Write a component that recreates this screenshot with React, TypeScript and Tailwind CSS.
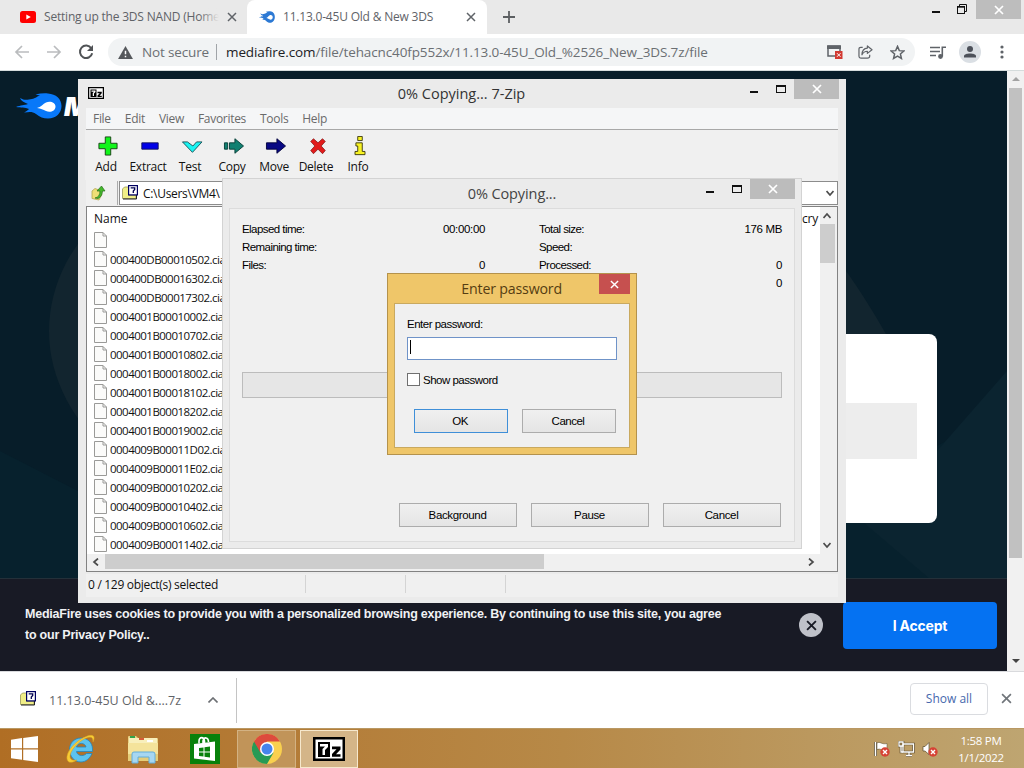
import React from "react";

const FILES = [
  "",
  "000400DB00010502.cia",
  "000400DB00016302.cia",
  "000400DB00017302.cia",
  "0004001B00010002.cia",
  "0004001B00010702.cia",
  "0004001B00010802.cia",
  "0004001B00018002.cia",
  "0004001B00018102.cia",
  "0004001B00018202.cia",
  "0004001B00019002.cia",
  "0004009B00011D02.cia",
  "0004009B00011E02.cia",
  "0004009B00010202.cia",
  "0004009B00010402.cia",
  "0004009B00010602.cia",
  "0004009B00011402.cia",
];

function Cross({ size, width, className }: { size: number; width: number; className: string }) {
  return (
    <svg width={size} height={size} viewBox="0 0 10 10" className={className} fill="none" stroke="currentColor" strokeWidth={width}>
      <path d="M1 1L9 9M9 1L1 9" />
    </svg>
  );
}

function Flame({ className, color, inner }: { className: string; color: string; inner: string }) {
  return (
    <svg viewBox="0 0 46 26" preserveAspectRatio="none" className={className}>
      <path
        d="M0 14C5 12 8 12.500 12 11C8 9.500 5 8 4 5C9 8 12 6.500 16 6C19 5.500 20 4 24 2.500C22 2.200 21 2 19.500 1.500C24 0.500 28 0 32 0.500C40 1 45.500 6 45.500 13C45.500 20 40 25.500 32 25.500C27 25.500 24 24 20 21C16 18 13 19 8 19.500C11 18 12 17 13 16C9 14 5 15 0 14Z"
        fill={color}
      />
      <path d="M21 15C25 14 27 11 30 9.500C34 7.500 39.500 9.500 39.500 13.500C39.500 18 34 20 30 18C27 16.500 25 15.500 21 15Z" fill={inner} />
    </svg>
  );
}

function SevenZip({ className }: { className: string }) {
  return (
    <svg viewBox="0 0 32 24" className={className}>
      <rect width="32" height="24" fill="#000" />
      <rect x="2.500" y="2.500" width="27" height="19" fill="#fff" />
      <rect x="5" y="5" width="12" height="15" fill="#000" />
      <path d="M7 7H15V10L12 13V18H9.500V12L12 9.500H7Z" fill="#fff" />
      <path d="M19 9.500H27.500V12.500L23 17.300H27.500V19.800H19V17L23.500 12.300H19Z" fill="#000" />
    </svg>
  );
}

function ArchiveIcon({ className }: { className: string }) {
  return (
    <svg viewBox="0 0 16 15" className={className}>
      <path d="M0.500 4L2.500 2H7V10.500H14V13.500H0.500Z" fill="#f0ee87" stroke="#8d8b4a" strokeWidth="0.700" />
      <path d="M1 14H14.500V10" stroke="#222" fill="none" />
      <rect x="6.600" y="0.600" width="8.800" height="9.300" fill="#fff" stroke="#000060" strokeWidth="1.200" />
      <path d="M8.700 2.900H12.700V4.500L11.300 6V8" stroke="#000050" strokeWidth="1.300" fill="none" />
    </svg>
  );
}

function WindowButtons({ closeClass }: { closeClass: string }) {
  return (
    <div className="flex shrink-0 items-start">
      <div className="mt-3 h-[2px] w-2 bg-[#111]" />
      <div className="mt-[6px] ml-[18px] h-2 w-[10px] border border-t-2 border-[#111]" />
      <div className={closeClass}>
        <Cross size={10} width={1.700} className="text-white" />
      </div>
    </div>
  );
}

function BrowserChrome() {
  return (
    <>
      <div className="flex h-[34px] shrink-0 bg-[#e9e9e9] text-[12px] text-[#5f6368]">
        <div className="flex w-[247px] items-center pl-5">
          <svg viewBox="0 0 16 12" className="h-3 w-4">
            <rect width="16" height="12" rx="2.500" fill="#f00" />
            <path d="M6.300 3.400L10.800 6L6.300 8.600Z" fill="#fff" />
          </svg>
          <div className="relative ml-2 w-[175px] overflow-hidden font-['Open_Sans',sans-serif] tracking-[-0.200px] whitespace-nowrap">
            Setting up the 3DS NAND (Home
            <div className="absolute inset-y-0 right-0 w-5 bg-linear-to-r from-transparent to-[#e9e9e9]" />
          </div>
          <Cross size={10} width={1.500} className="ml-[8px] text-[#5f6368]" />
        </div>
        <div className="flex w-[240px] items-center rounded-t-lg bg-white pl-3">
          <Flame className="h-[12px] w-4" color="#2c79d4" inner="#fff" />
          <span className="ml-2 w-[184px] font-['Open_Sans',sans-serif] tracking-[-0.200px] whitespace-nowrap">11.13.0-45U Old &amp; New 3DS</span>
          <Cross size={10} width={1.500} className="-ml-px text-[#5f6368]" />
        </div>
        <svg viewBox="0 0 12 12" className="mt-[11px] ml-4 h-3 w-3" stroke="#5c5f62" strokeWidth="1.800">
          <path d="M6 0V12M0 6H12" />
        </svg>
        <div className="ml-auto flex items-start">
          <div className="mt-[11px] h-[2px] w-2 bg-[#111]" />
          <svg viewBox="0 0 10 10" className="mt-1 ml-[17px] h-[10px] w-[10px]" fill="none" stroke="#111">
            <path d="M2.500 2V0.500H9.500V7.500H8" />
            <rect x="0.500" y="2.500" width="7" height="7" />
            <path d="M0 3.200H8" />
          </svg>
          <div className="mr-[3px] ml-[9px] flex h-[19px] w-[45px] items-center justify-center bg-[#bdbdbd]">
            <Cross size={10} width={1.700} className="text-white" />
          </div>
        </div>
      </div>
      <div className="flex h-[37px] shrink-0 items-center border-b border-[#d5dcdc] bg-white pl-[14px]">
        <svg viewBox="0 0 16 14" className="h-[14px] w-4" fill="none" stroke="#babcbe" strokeWidth="1.700">
          <path d="M15 7H2M8 1L2 7L8 13" />
        </svg>
        <svg viewBox="0 0 16 14" className="ml-4 h-[14px] w-4" fill="none" stroke="#babcbe" strokeWidth="1.700">
          <path d="M1 7H14M8 1L14 7L8 13" />
        </svg>
        <svg viewBox="0 0 16 16" className="ml-4 h-4 w-4" fill="none" stroke="#505356" strokeWidth="2">
          <path d="M13.300 4.300A6.200 6.200 0 1 0 14.200 9.300" />
          <path d="M15 1V7H9Z" fill="#505356" stroke="none" />
        </svg>
        <div className="ml-[14px] flex h-7 w-[807px] items-center rounded-full bg-[#f1f3f4] pl-[10px] font-['Open_Sans',sans-serif] text-[13.500px] whitespace-nowrap text-[#6b6f73]">
          <svg viewBox="0 0 16 14" className="h-[13px] w-[15px]">
            <path d="M8 0L16 14H0Z" fill="#55585c" />
            <path d="M7.200 5H8.800V9H7.200ZM7.200 10.500H8.800V12H7.200Z" fill="#fff" />
          </svg>
          <span className="ml-[9px] w-[67px] tracking-[-0.150px]">Not secure</span>
          <span className="ml-[7px] h-4 w-px bg-[#a0a4a8]" />
          <span className="ml-[9px] w-[580px] tracking-[-0.120px]">
            <span className="text-[#202124]">mediafire.com</span>/file/tehacnc40fp552x/11.13.0-45U_Old_%2526_New_3DS.7z/file
          </span>
          <svg viewBox="0 0 16 14" className="ml-[21px] h-[14px] w-4">
            <path d="M1 1H13V11H1Z" fill="none" stroke="#5f6368" strokeWidth="1.500" />
            <path d="M0 0.500H14V4H0Z" fill="#5f6368" />
            <rect x="8" y="6" width="7.500" height="8" fill="#d23a32" />
            <path d="M10 8.200L13.500 11.800M13.500 8.200L10 11.800" stroke="#fff" />
          </svg>
        </div>
        <div className="-ml-[57px] flex items-center text-[#5f6368]">
          <svg viewBox="0 0 16 15" className="h-[14px] w-[15px]" fill="none" stroke="currentColor" strokeWidth="1.300" strokeLinejoin="round">
            <path d="M5 2.500H3Q1 2.500 1 4.500V12Q1 14 3 14H10Q12.500 14 12.500 12V10.500" />
            <path d="M10 1L15 5L10 9V6.700C7 6.700 5.500 8 4.200 10.500C4.300 6 6.500 3.500 10 3.300Z" />
          </svg>
          <svg viewBox="0 0 16 16" className="ml-[17px] h-[15px] w-[15px]" fill="none" stroke="currentColor" strokeWidth="1.600">
            <path d="M8 1.500L9.900 6L14.800 6.400L11.100 9.600L12.200 14.300L8 11.800L3.800 14.300L4.900 9.600L1.200 6.400L6.100 6Z" />
          </svg>
          <svg viewBox="0 0 16 13" className="ml-[25px] h-[13px] w-4" fill="none" stroke="currentColor" strokeWidth="1.600">
            <path d="M0 1.500H10M0 5.500H10M0 9.500H6M12.300 10.500V1.300H16" />
            <circle cx="10.500" cy="10.500" r="1.600" fill="currentColor" />
          </svg>
          <svg viewBox="0 0 22 22" className="ml-[13px] h-[22px] w-[22px]">
            <circle cx="11" cy="11" r="11" fill="#dadfe4" />
            <circle cx="11" cy="8" r="3" fill="#4c515a" />
            <path d="M5 16.500V15C5 11.500 17 11.500 17 15V16.500Z" fill="#4c515a" />
          </svg>
          <svg viewBox="0 0 4 14" className="ml-[19px] h-[14px] w-1" fill="currentColor">
            <circle cx="2" cy="2" r="1.600" />
            <circle cx="2" cy="7" r="1.600" />
            <circle cx="2" cy="12" r="1.600" />
          </svg>
        </div>
      </div>
    </>
  );
}

function WebPage() {
  return (
    <div className="flex h-[600px] shrink-0">
      <div className="relative flex w-[1007px] flex-col overflow-hidden bg-[#071d29]">
        <svg viewBox="0 0 1007 508" className="absolute top-0 left-0 h-[508px] w-[1007px]">
          <path d="M0 380V508H1007V340L846 420H78Z" fill="#07212d" />
          <ellipse cx="280" cy="260" rx="231" ry="180" fill="#12252f" />
          <path d="M700 90C800 120 850 200 890 270L900 400H846Z" fill="#12252f" />
          <path d="M850 440L937 380L1007 300V508H930Z" fill="#0b2430" />
        </svg>
        <div className="relative flex items-center pt-[22px] pl-4">
          <Flame className="h-[26px] w-[46px]" color="#0878f9" inner="#fff" />
          <span className="ml-[2px] pt-[2px] font-['Inter',sans-serif] text-[26px] leading-[24px] font-black text-white italic">M</span>
        </div>
        <div className="relative mt-[215px] ml-[500px] flex h-[189px] w-[437px] items-center justify-end rounded-lg bg-white pt-1 pr-5">
          <div className="h-14 w-[200px] bg-[#ededed]" />
        </div>
        <div className="relative mt-auto flex h-[93px] border-t border-[#243039] bg-[#181a25]">
          <div className="flex w-[720px] flex-col pt-[25px] pl-[25px] font-['Liberation_Sans',sans-serif] text-[12.500px] leading-[21px] font-bold tracking-[-0.230px] whitespace-nowrap text-[#f0f1f4]">
            <span>MediaFire uses cookies to provide you with a personalized browsing experience. By continuing to use this site, you agree</span>
            <span>to our Privacy Policy..</span>
          </div>
          <div className="mt-[34px] ml-[79px] flex h-6 w-6 items-center justify-center rounded-full bg-[#bfc1c9]">
            <Cross size={11} width={1.700} className="text-[#181a25]" />
          </div>
          <div className="mt-[23px] ml-5 flex h-[47px] w-[154px] items-center justify-center rounded bg-[#0572f2] font-['Inter',sans-serif] text-[14px] font-bold tracking-[-0.200px] text-white">
            I Accept
          </div>
        </div>
      </div>
      <div className="flex w-[17px] flex-col items-center bg-[#f1f1f1]">
        <div className="mt-[6px] h-0 w-0 border-x-4 border-b-4 border-x-transparent border-b-[#a3a3a3]" />
        <div className="mt-[7px] h-[470px] w-[13px] bg-[#c1c1c1]" />
        <div className="mt-auto mb-[8px] h-0 w-0 border-x-4 border-t-4 border-x-transparent border-t-[#444]" />
      </div>
    </div>
  );
}

function DownloadBar() {
  return (
    <div className="flex h-[57px] shrink-0 items-center border-t border-[#d9dadd] bg-white font-['Open_Sans',sans-serif] text-[12.500px] text-[#5f6368]">
      <ArchiveIcon className="mb-1 ml-5 h-[15px] w-4" />
      <span className="ml-[13px] w-[149px] pt-[2px] whitespace-nowrap">11.13.0-45U Old &amp;....7z</span>
      <svg viewBox="0 0 10 6" className="ml-[10px] h-[6px] w-[10px]" fill="none" stroke="#6c6f73" strokeWidth="1.600">
        <path d="M0.500 5.500L5 1L9.500 5.500" />
      </svg>
      <div className="ml-[18px] h-[45px] w-px bg-[#c4c4c4]" />
      <div className="ml-auto flex h-8 w-[78px] -translate-y-px items-center justify-center rounded border border-[#dadce0] text-[12px] font-medium text-[#4668ad]">Show all</div>
      <Cross size={11} width={1.500} className="mr-[12px] mb-[3px] ml-[13px] text-[#70757a]" />
    </div>
  );
}

function ExplorerIcon() {
  return (
    <svg viewBox="0 0 32 30" className="h-[30px] w-8">
      <path d="M1 3Q1 2 2 2H9L11 4H30Q31 4 31 5V27H1Z" fill="#e7d184" />
      <path d="M2 4H30V12H2Z" fill="#f8efbb" />
      <path d="M3 2H8V4H3Z" fill="#31a34a" />
      <path d="M12 4H17V6H12Z" fill="#d65c39" />
      <path d="M20 6H26V8H20Z" fill="#fff" />
      <path d="M1 9H31V26H1Z" fill="#f4e39b" />
      <path d="M1 20H31V27H1Z" fill="#e5cd78" />
      <path d="M5 29V20Q5 18 7 18H26Q28 18 28 20V29H22V23H11V29Z" fill="#a7d7f1" stroke="#62aeda" />
    </svg>
  );
}

function Taskbar() {
  return (
    <div className="flex h-10 shrink-0 items-center border-t border-[#b99863] bg-linear-to-r from-[#b06e24] via-[#b78947] via-55% to-[#bea571]">
      <svg viewBox="0 0 27 26" className="ml-[11px] h-[26px] w-[27px]" fill="#fff">
        <path d="M0 3.700L11 2.100V12.300H0ZM12.200 1.900L27 0V12.300H12.200ZM0 13.500H11V23.800L0 22.200ZM12.200 13.500H27V26L12.200 24Z" />
      </svg>
      <svg viewBox="0 0 32 32" className="ml-[27px] h-8 w-8">
        <path d="M16 5C22.500 5 27.500 9.500 27.500 16V18.500H11.500C11.800 22 17.500 24.500 21.500 20.500H27C25 25.500 20.500 29 16 29C9 29 4.500 23 4.500 16.500C4.500 10 9.500 5 16 5ZM11.500 14H21C20.500 9.500 12.500 9 11.500 14Z" fill="#5cc3ef" stroke="#2385bd" strokeWidth="0.800" />
        <path d="M28 9C31 3 28 0.500 20.500 3.800C10 8 1 19 2 26C3 31 8 29.500 12 27C7 28 4.500 26.500 5 22.500C7 14 17 6 23 4.500C27 3.500 28 5 28 9Z" fill="#f8cd36" stroke="#d9a01c" strokeWidth="0.500" />
      </svg>
      <div className="ml-[30px]">
        <ExplorerIcon />
      </div>
      <svg viewBox="0 0 30 30" className="ml-[31px] h-[30px] w-[30px]">
        <rect width="30" height="30" fill="#08810b" />
        <path d="M4 10L25 7.500V27L4 24.500Z" fill="#fff" />
        <path d="M9 9.500V7C9 2.500 14 2.500 14.500 7V9M13 9V7C14 2.500 18.500 3 18.500 8" fill="none" stroke="#fff" strokeWidth="1.600" />
        <path d="M9 14L13.500 13.400V17.500H9ZM14.500 13.200L20 12.500V17.500H14.500ZM9 18.500H13.500V22.500L9 22ZM14.500 18.500H20V23.400L14.500 22.700Z" fill="#08810b" />
      </svg>
      <div className="ml-[17px] flex h-[38px] w-[59px] items-center justify-center border border-[#d3b283] bg-[#c19459]">
        <svg viewBox="0 0 30 30" className="h-[30px] w-[30px]">
          <circle cx="15" cy="15" r="15" fill="#f9d04f" />
          <path d="M15 15L2 7.500A15 15 0 0 0 15 30L21.500 18.700Z" fill="#279a55" />
          <path d="M2 7.500A15 15 0 0 1 28 7.500H15L8.500 18.700Z" fill="#dd4b3d" />
          <circle cx="15" cy="15" r="7" fill="#fff" />
          <circle cx="15" cy="15" r="5.500" fill="#4684ec" />
        </svg>
      </div>
      <div className="ml-[4px] flex h-[38px] w-[58px] items-center justify-center border border-[#f6e8cd] bg-[#d4b588]">
        <SevenZip className="h-6 w-8" />
      </div>
      <div className="ml-auto flex items-center">
        <svg viewBox="0 0 16 16" className="h-4 w-4">
          <path d="M1.500 1V15" stroke="#57482d" strokeWidth="3" />
          <path d="M1.500 1V15" stroke="#fff" strokeWidth="1.500" />
          <path d="M3 2C6 0 8 4 13 2.500V9C9 10 6 7 3 8.500Z" fill="#fff" stroke="#57482d" strokeWidth="0.500" />
          <circle cx="11" cy="11" r="4.700" fill="#d64335" />
          <path d="M9 9L13 13M13 9L9 13" stroke="#fff" strokeWidth="1.400" />
        </svg>
        <svg viewBox="0 0 17 16" className="ml-2 h-4 w-[17px]" fill="none">
          <path d="M5 3H15.500V11H5ZM8 14.500H14M11 11V14.500M1 1H5V5H1ZM3 5V11H5" stroke="#57482d" strokeWidth="2.600" />
          <path d="M5 3H15.500V11H5ZM8 14.500H14M11 11V14.500" stroke="#fff" strokeWidth="1.300" />
          <path d="M1 1H5V5H1ZM3 5V11H5" stroke="#fff" strokeWidth="1.300" />
        </svg>
        <svg viewBox="0 0 16 16" className="ml-[7px] h-4 w-4">
          <path d="M1 5.500H3L7 1.500V13.500L3 10H1Z" fill="#fff" stroke="#57482d" strokeWidth="0.700" />
          <circle cx="11" cy="11" r="4.700" fill="#d64335" />
          <path d="M9 9L13 13M13 9L9 13" stroke="#fff" strokeWidth="1.400" />
        </svg>
      </div>
      <div className="mr-[15px] ml-[15px] flex w-[56px] flex-col items-center font-['Open_Sans',sans-serif] text-[11.500px] leading-[17px] tracking-[-0.300px] whitespace-nowrap text-white">
        <span>1:58 PM</span>
        <span>1/1/2022</span>
      </div>
    </div>
  );
}

const TOOLS = [
  {
    label: "Add",
    icon: <path d="M8 1H14V8H21V14H14V21H8V14H1V8H8Z" fill="#12f51b" stroke="#153d12" />,
  },
  { label: "Extract", icon: <path d="M2 7.500H20V14.500H2Z" fill="#0000e8" stroke="#11115c" /> },
  { label: "Test", icon: <path d="M0.500 6.500H6L12 11L16 6.500H22L11.500 18Z" fill="#19f3f1" stroke="#174f55" /> },
  {
    label: "Copy",
    icon: <path d="M0.500 7.500H4V14.500H0.500ZM6 7.500H12V3L21.500 11L12 19V14.500H6Z" fill="#118071" stroke="#063c35" />,
  },
  { label: "Move", icon: <path d="M0.500 7.500H12V3L21.500 11L12 19V14.500H0.500Z" fill="#080884" stroke="#00003a" /> },
  {
    label: "Delete",
    icon: <path d="M3 6L6 3L11 7.500L16 3L19 6L14.500 11L19 16L16 19.500L11 14.500L6 19.500L3 16L7.500 11Z" fill="#e21b1b" stroke="#801515" strokeWidth="0.800" />,
  },
  {
    label: "Info",
    icon: <path d="M8.500 0.500H13.500V5H8.500ZM6.500 7.500H13.500V17H16.500V20.500H5.500V17H8.500V11H6.500Z" fill="#f7f223" stroke="#39370e" />,
  },
];

function Chevron({ d, className }: { d: string; className: string }) {
  return (
    <svg viewBox="0 0 8 8" className={className} fill="none" stroke="#4b4b4b" strokeWidth="1.700">
      <path d={d} />
    </svg>
  );
}

function FileManager() {
  return (
    <div className="absolute top-[79px] left-[78px] flex h-[524px] w-[768px] flex-col bg-[#ebebeb] px-2 pb-[6px] font-['Open_Sans',sans-serif] text-[12px] text-[#111]">
      <div className="flex h-[29px] shrink-0">
        <SevenZip className="mt-[8px] ml-[2px] h-3 w-4 shrink-0" />
        <div className="mt-[5px] w-[646px] shrink-0 pl-[69px] text-center text-[14.500px] leading-[20px] tracking-normal text-[#333]">
          0% Copying... 7-Zip
        </div>
        <WindowButtons closeClass="ml-[8px] flex h-5 w-[45px] shrink-0 items-center justify-center bg-[#bcbcbc]" />
      </div>
      <div className="flex h-[22px] shrink-0 items-center gap-[14px] border-b border-[#a8a8a8] bg-[#f5f6f7] pl-[7px] text-[12px] tracking-[-0.300px] text-[#6a6a6a]">
        <span>File</span>
        <span>Edit</span>
        <span>View</span>
        <span>Favorites</span>
        <span>Tools</span>
        <span>Help</span>
      </div>
      <div className="-ml-px flex h-[50px] shrink-0 bg-[#f0f0f0] tracking-[-0.250px]">
        {TOOLS.map((t) => (
          <div key={t.label} className="flex w-[42px] flex-col items-center pt-[6px]">
            <svg viewBox="0 0 22 22" className="ml-[3px] h-5 w-[22px]">
              {t.icon}
            </svg>
            <span className="mt-[3px] leading-4">{t.label}</span>
          </div>
        ))}
      </div>
      <div className="flex h-[26px] shrink-0 items-center bg-[#f0f0f0]">
        <svg viewBox="0 0 16 16" className="ml-[5px] h-4 w-4">
          <path d="M1 6L4 3.500L8 5L11 9L8 15L1 13.500Z" fill="#efdf76" stroke="#ab9f44" strokeWidth="0.700" />
          <path d="M4 13Q9 12 9 6H6L10.500 1L14 6H11.500Q11 12 7 13.500Z" fill="#45b82d" stroke="#27701b" strokeWidth="0.700" />
        </svg>
        <div className="ml-[10px] h-[24px] w-px bg-[#aaa]" />
        <div className="ml-[1px] flex h-[24px] flex-1 items-center justify-between border border-[#8c8c8c] bg-white pr-[3px] pl-[2px]">
          <div className="flex items-center">
            <ArchiveIcon className="mb-[2px] h-[15px] w-4" />
            <span className="ml-[5px] pt-px tracking-[-0.300px]">C:\Users\VM4\</span>
          </div>
          <Chevron d="M0.500 2L4 6L7.500 2" className="h-2 w-2" />
        </div>
      </div>
      <div className="flex h-[366px] shrink-0 flex-col border border-[#828282] bg-white">
        <div className="flex h-[347px]">
          <div className="flex flex-1 flex-col overflow-hidden pl-[7px]">
            <div className="flex h-[23px] shrink-0 items-center justify-between pt-px">
              <span>Name</span>
              <span className="pr-[2px] tracking-[-0.200px]">cry</span>
            </div>
            {FILES.map((f, i) => (
              <div key={i} className="flex h-[19px] shrink-0 items-center">
                <svg viewBox="0 0 13 16" className="h-4 w-[13px]">
                  <path d="M0.500 0.500H9L12.500 4V15.500H0.500Z" fill="#fbfbfa" stroke="#9a9a98" />
                  <path d="M9 0.500V4H12.500" fill="none" stroke="#9a9a98" />
                </svg>
                <span className="ml-[3px] pt-[2px] text-[11.500px] tracking-[-0.520px] whitespace-nowrap">{f}</span>
              </div>
            ))}
          </div>
          <div className="flex w-[17px] flex-col items-center bg-[#f0f0f0]">
            <Chevron d="M0.500 6L4 2L7.500 6" className="mt-[5px] mr-[3px] h-2 w-2" />
            <div className="mt-[4px] mr-[2px] h-[39px] w-[15px] bg-[#cdcdcd]" />
            <Chevron d="M0.500 2L4 6L7.500 2" className="mt-auto mr-[3px] mb-[5px] h-2 w-2" />
          </div>
        </div>
        <div className="flex flex-1 items-center bg-[#f0f0f0] pb-[2px]">
          <Chevron d="M6 0.500L2 4L6 7.500" className="ml-[5px] h-2 w-2" />
          <div className="ml-[5px] h-[15px] w-[439px] bg-[#cdcdcd]" />
          <Chevron d="M2 0.500L6 4L2 7.500" className="mr-[22px] ml-auto h-2 w-2" />
        </div>
      </div>
      <div className="mt-[2px] flex flex-1 items-center bg-[#f0f0f0] pl-[2px]">
        <span className="w-[217px] pb-px tracking-[-0.300px] whitespace-nowrap">0 / 129 object(s) selected</span>
        <div className="mb-1 h-[18px] w-[100px] border-l border-[#d4d4d4]" />
        <div className="mb-1 h-[18px] w-[100px] border-l border-[#d4d4d4]" />
        <div className="mb-1 h-[18px] w-[100px] border-l border-[#d4d4d4]" />
      </div>
    </div>
  );
}

function Stat({ label, value }: { label: string; value: string }) {
  return (
    <div className="flex h-[18px] justify-between">
      <span className="tracking-[-0.560px]">{label}</span>
      <span>{value}</span>
    </div>
  );
}

function ProgressWindow() {
  return (
    <div className="absolute top-[178px] left-[222px] flex h-[371px] w-[580px] flex-col border border-[#d3d3d3] bg-[#ebebeb] px-[6px] pb-[6px] font-['Liberation_Sans',sans-serif] text-[11.500px] tracking-[-0.350px] text-black">
      <div className="flex h-[29px] shrink-0">
        <div className="mt-[5px] w-[477px] shrink-0 pl-[89px] text-center font-['Open_Sans',sans-serif] text-[14.500px] leading-[20px] tracking-[-0.100px] text-[#444]">
          0% Copying...
        </div>
        <WindowButtons closeClass="ml-[8px] flex h-5 w-[45px] shrink-0 items-center justify-center bg-[#bcbcbc]" />
      </div>
      <div className="flex flex-1 flex-col border border-[#dcdcdc] bg-[#f0f0f0] pr-[12px] pl-[12px]">
        <div className="flex h-[84px] shrink-0 justify-between pt-[11px] leading-[18px]">
          <div className="w-[243px]">
            <Stat label="Elapsed time:" value="00:00:00" />
            <Stat label="Remaining time:" value="" />
            <Stat label="Files:" value="0" />
          </div>
          <div className="w-[243px]">
            <Stat label="Total size:" value="176 MB" />
            <Stat label="Speed:" value="" />
            <Stat label="Processed:" value="0" />
            <Stat label="" value="0" />
          </div>
        </div>
        <div className="mt-[79px] h-[26px] shrink-0 border border-[#bcbcbc] bg-[#e6e6e6]" />
        <div className="mt-auto mr-px mb-[14px] flex justify-end gap-[14px]">
          {["Background", "Pause", "Cancel"].map((b) => (
            <div key={b} className="flex h-6 w-[118px] items-center justify-center border border-[#acacac] bg-linear-to-b from-[#f0f0f0] to-[#e5e5e5] pt-[2px] pr-px">
              {b}
            </div>
          ))}
        </div>
      </div>
    </div>
  );
}

function PasswordDialog() {
  return (
    <div className="absolute top-[273px] left-[387px] flex h-[182px] w-[250px] flex-col border border-[#b4924c] bg-[#efc669] px-[6px] pb-[6px] font-['Liberation_Sans',sans-serif] text-[11.500px] tracking-[-0.500px] text-black">
      <div className="flex h-[29px] shrink-0 justify-end">
        <span className="mt-[5px] mr-[37px] font-['Open_Sans',sans-serif] text-[14.200px] leading-[20px] tracking-[-0.180px] text-[#553d12]">Enter password</span>
        <div className="flex h-5 w-[31px] items-center justify-center bg-[#c6504f]">
          <Cross size={9} width={1.600} className="text-white" />
        </div>
      </div>
      <div className="flex flex-1 flex-col border border-[#c9a95f] bg-[#f0f0f0] px-3">
        <span className="mt-[13px] leading-[14px]">Enter password:</span>
        <div className="mt-[6px] flex h-[23px] w-[210px] items-center border border-[#6f93c8] bg-white pl-[2px]">
          <div className="mb-1 h-[14px] w-px bg-black" />
        </div>
        <div className="mt-[13px] flex h-[13px] items-center">
          <div className="h-[13px] w-[13px] border border-[#707070] bg-white" />
          <span className="ml-[3px] pt-[2px]">Show password</span>
        </div>
        <div className="mt-[23px] flex gap-[14px] pl-[7px]">
          <div className="flex h-6 w-[94px] items-center justify-center border border-[#3f8fd8] bg-linear-to-b from-[#f0f0f0] to-[#e5e5e5] pt-[2px] pr-[2px]">OK</div>
          <div className="flex h-6 w-[94px] items-center justify-center border border-[#acacac] bg-linear-to-b from-[#f0f0f0] to-[#e5e5e5] pt-[2px] pr-[2px]">Cancel</div>
        </div>
      </div>
    </div>
  );
}

export default function App() {
  return (
    <div className="relative flex h-[768px] w-[1024px] flex-col overflow-hidden">
      <BrowserChrome />
      <WebPage />
      <DownloadBar />
      <Taskbar />
      <FileManager />
      <ProgressWindow />
      <PasswordDialog />
    </div>
  );
}
